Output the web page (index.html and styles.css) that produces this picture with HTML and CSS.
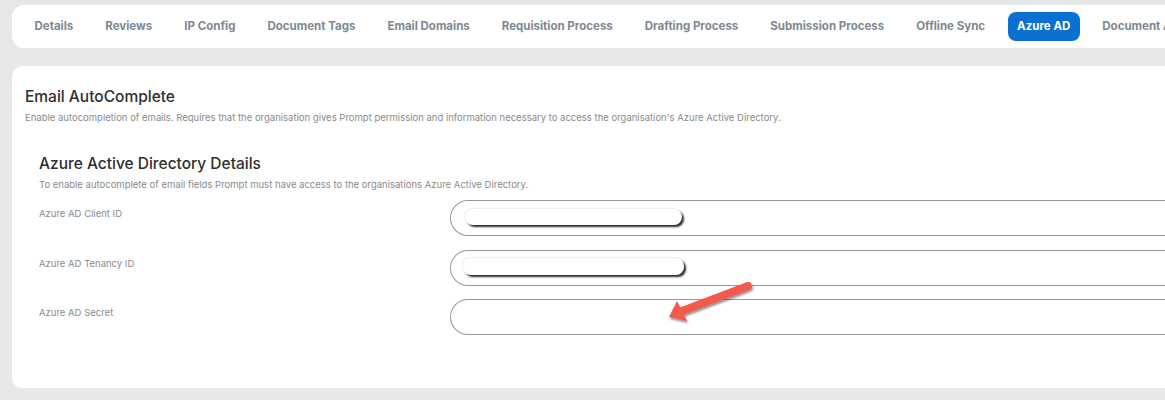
FILE: index.html
```html
<!DOCTYPE html>
<html>
<head>
<meta charset="utf-8">
<link rel="stylesheet" href="styles.css">
</head>
<body>
<div class="page">
  <nav class="tabs">
    <span class="tab">Details</span>
    <span class="tab">Reviews</span>
    <span class="tab">IP Config</span>
    <span class="tab">Document Tags</span>
    <span class="tab">Email Domains</span>
    <span class="tab">Requisition Process</span>
    <span class="tab">Drafting Process</span>
    <span class="tab">Submission Process</span>
    <span class="tab">Offline Sync</span>
    <span class="tab active">Azure AD</span>
    <span class="tab">Document A</span>
  </nav>

  <main class="card">
    <h2 class="title">Email AutoComplete</h2>
    <p class="desc">Enable autocompletion of emails. Requires that the organisation gives Prompt permission and information necessary to access the organisation's Azure Active Directory.</p>

    <section class="sub">
      <h3 class="title">Azure Active Directory Details</h3>
      <p class="desc">To enable autocomplete of email fields Prompt must have access to the organisations Azure Active Directory.</p>

      <div class="form">
        <label class="label">Azure AD Client ID</label>
        <div class="input"><span class="redact r1"></span></div>

        <label class="label">Azure AD Tenancy ID</label>
        <div class="input"><span class="redact r2"></span></div>

        <label class="label">Azure AD Secret</label>
        <div class="input"></div>
      </div>
    </section>

    <svg class="arrow" width="100" height="50" viewBox="0 0 100 50">
      <defs>
        <filter id="sh" x="-20%" y="-20%" width="140%" height="160%">
          <feDropShadow dx="1" dy="2" stdDeviation="1.2" flood-color="#000" flood-opacity="0.45"/>
        </filter>
      </defs>
      <g filter="url(#sh)">
        <line x1="88" y1="8" x2="22" y2="33" stroke="#f45a4c" stroke-width="8" stroke-linecap="round"/>
        <polygon points="9,39 17,23 27,43" fill="#f45a4c"/>
      </g>
    </svg>
  </main>
</div>
</body>
</html>
```

FILE: styles.css
```css
html, body {
  margin: 0;
  padding: 0;
}
body {
  background: #e6e7e9;
  font-family: "Inter", "Open Sans", sans-serif;
  overflow: hidden;
  width: 1165px;
  height: 400px;
}
.page {
  padding: 5px 0 0 12px;
  width: 1300px;
}
.tabs {
  display: flex;
  align-items: center;
  gap: 13px;
  height: 43px;
  background: #fff;
  border-radius: 12px;
  padding-left: 13px;
  box-sizing: border-box;
  white-space: nowrap;
}
.tab {
  font-size: 11.5px;
  font-weight: 700;
  color: #7d8894;
  padding: 0 9.5px;
  line-height: 29px;
  border-radius: 8px;
}
.tab.active {
  background: #0b70d2;
  color: #fff;
}
.card {
  position: relative;
  margin-top: 18px;
  height: 322px;
  background: #fff;
  border-radius: 10px;
  padding: 21px 13px 0;
  box-sizing: border-box;
}
.title {
  margin: 0;
  font-size: 15.5px;
  font-weight: 500;
  color: #2e2e2e;
  line-height: 20px;
}
.desc {
  margin: 5px 0 0;
  font-size: 9.5px;
  color: #8a8a8a;
  line-height: 12px;
}
.sub {
  padding: 0 0 0 14px;
  margin-top: 30px;
}
.sub .desc {
  margin-top: 5px;
}
.form {
  display: grid;
  grid-template-columns: 411px 1fr;
  row-gap: 13.5px;
  margin-top: 9px;
}
.label {
  font-size: 9.5px;
  color: #8a8a8a;
  padding-top: 8px;
}
.input {
  position: relative;
  height: 36px;
  border: 1px solid #999;
  border-right: none;
  border-radius: 18px 0 0 18px;
  box-sizing: border-box;
}
.redact {
  position: absolute;
  background: #fff;
  border-radius: 8px;
  box-shadow: 2px 2px 2px #2a2a2a, -1px -1px 1px #eee;
}
.r1 {
  left: 14px;
  top: 8px;
  width: 217px;
  height: 16px;
}
.r2 {
  left: 12px;
  top: 7px;
  width: 221px;
  height: 17px;
}
.arrow {
  position: absolute;
  left: 648px;
  top: 212px;
}
```
